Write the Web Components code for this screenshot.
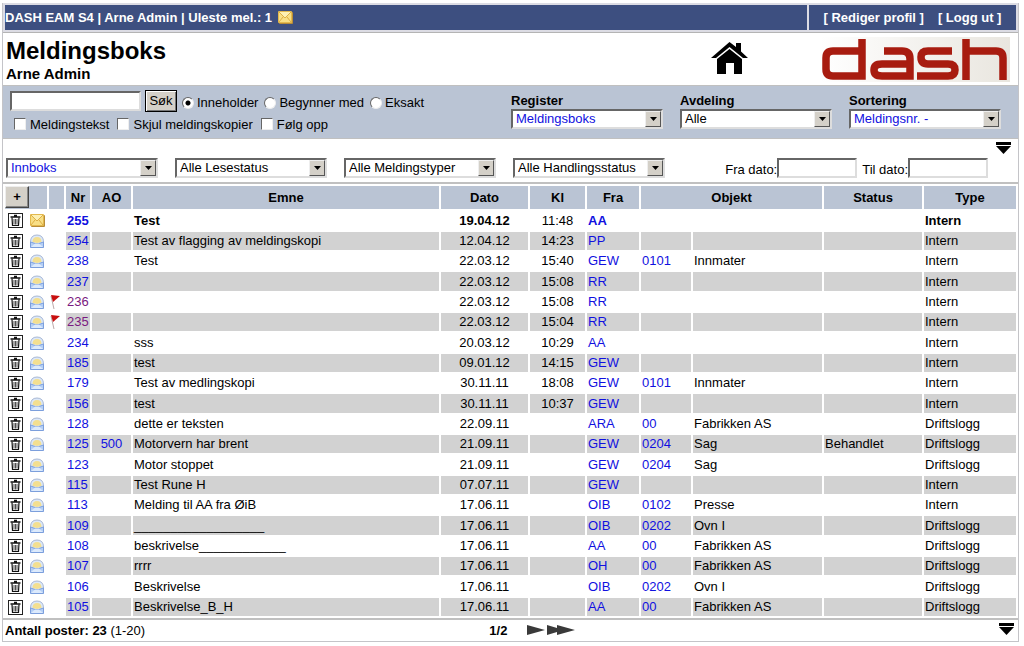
<!DOCTYPE html>
<html lang="no">
<head>
<meta charset="utf-8">
<title>Meldingsboks</title>
<style>
body{margin:3px 5px 3px 2px;background:#fff;color:#000;font:13px/16px "Liberation Sans",Arial,sans-serif}
</style>
</head>
<body>
<message-app></message-app>
<script>
const define = (name, html, setup) => {
  const template = document.createElement('template');
  template.innerHTML = html;
  customElements.define(name, class extends HTMLElement {
    connectedCallback() {
      if (this.shadowRoot) return;
      const root = this.attachShadow({mode: 'open'});
      root.append(template.content.cloneNode(true));
      if (setup) setup(root, this);
    }
  });
};

const icons = {
  mail: [15, 13, `<rect x="1" y="1" width="14" height="12" rx="1" fill="#b88c38"/><rect width="14" height="12" rx="1" fill="#e3b94e"/><rect x="1" y="1" width="12" height="10" fill="#f8df86"/><path d="M1 1H13L7 7Z" fill="#fdf0b4"/><path d="M1 1L7 7L13 1M1 11L5 6M13 11L9 6" fill="none" stroke="#d9a83c" stroke-width=".9"/>`],
  open: [14, 14, `<path d="M.5 8Q.5 1 7 1Q13.500 1 13.500 8V13H.5Z" fill="#dce8f8" stroke="#a8b8d4"/><path d="M2.500 8Q2.500 3 7 3Q11.500 3 11.500 8L7 9Z" fill="#f3df90"/><path d="M.5 8L5 9.500H9L13.500 8V13.500H.5Z" fill="#b4cff6" stroke="#7c9fdc"/><path d="M1 13L5 9.500H9L13 13Z" fill="#dceafc"/>`],
  trash: [15, 15, `<rect x=".5" y=".5" width="14" height="14" fill="#fff" stroke="#222"/><path d="M2.500 4H12.500M6 2.500H9" stroke="#111" stroke-width="1.400"/><path d="M4 4.500L4.500 12.500H10.500L11 4.500" fill="none" stroke="#111" stroke-width="1.200"/><path d="M6 6V11.500M7.500 6V11.500M9 6V11.500" stroke="#222" stroke-width=".8"/>`],
  flag: [11, 15, `<path d="M1 1L4 14" stroke="#baa" fill="none"/><path d="M1 0L10 1L3 7Z" fill="#c80f0f"/>`],
  home: [37, 32, `<path d="M0 16L18.500 0L25 5V1H30V9.500L37 16H32L18.500 5L5 16Z"/><path d="M6 17L18.500 7L31 17V32H23V21H15V32H6Z"/>`],
  down: [15, 12, `<path d="M0 0H15V3H0ZM0 4H15L7.500 12Z"/>`],
  next: [18, 10, `<path d="M0 0L18 5L0 10Z" fill="#3a3a3a"/>`],
  last: [28, 10, `<path d="M0 0L10 3V0L28 5L10 10V7L0 10Z" fill="#3a3a3a"/>`],
  logo: [190, 45, `<defs><linearGradient id="g"><stop offset="0" stop-color="#fff"/><stop offset="1" stop-color="#e9e6df"/></linearGradient></defs><rect width="190" height="45" fill="url(#g)"/><g fill="none" stroke="#a81c10" stroke-width="7.500"><path d="M42 2V39H13Q6 39 6 32V21Q6 14 13 14H42"/><path d="M64 14H82Q90 14 90 22V39H62Q54 39 54 33Q54 27 62 27H90"/><path d="M132 14H108Q101 14 101 20Q101 27 108 27H128Q135 27 135 33Q135 39 128 39H97"/><path d="M146 2V43M146 14H176Q183 14 183 21V43"/></g>`]
};
define('app-icon', `<style>:host{display:inline-block;line-height:0}svg{display:block}</style>`, (root, host) => {
  const [w, h, body] = icons[host.getAttribute('name')];
  root.innerHTML += `<svg width="${w}" height="${h}" viewBox="0 0 ${w} ${h}" aria-hidden="true">${body}</svg>`;
});

define('select-box', `<style>
:host{display:block;width:152px}
:host([active]) select{color:#1010e0}
label{display:block;font-weight:bold}
.box{display:grid;align-items:center;height:20px}
select{grid-area:1/1;appearance:none;box-sizing:border-box;width:100%;height:20px;margin:0;padding:0 20px 0 3px;border:2px solid;border-color:#666 #ddd #ddd #666;border-radius:0;background:#fff;color:#000;font:inherit}
.arrow{grid-area:1/1;justify-self:end;box-sizing:border-box;width:16px;height:16px;margin-right:2px;border:1px solid;border-color:#eee #555 #555 #eee;background:#d4d0c8;pointer-events:none;display:grid;place-items:center}
</style><label for="s"></label><div class="box"><select id="s"></select><span class="arrow"><svg width="7" height="4"><path d="M0 0H7L3.500 4Z"/></svg></span></div>`, (root, host) => {
  const label = root.querySelector('label'), select = root.querySelector('select');
  if (host.hasAttribute('label')) label.textContent = host.getAttribute('label');
  else { label.remove(); select.setAttribute('aria-label', host.getAttribute('value')); }
  select.add(new Option(host.getAttribute('value')));
});

define('top-bar', `<style>
:host{display:flex;gap:2px;padding:2px;background:#dcdce4;border-bottom:1px solid #b4b4b4;font-weight:bold;color:#fff}
div{background:#3d4f80;height:25px;display:flex;align-items:center;box-sizing:border-box}
.who{flex:1;gap:6px}.links{width:207px;justify-content:center;gap:14px}
a{color:inherit;text-decoration:none}
</style><div class="who"><span>DASH EAM S4 | Arne Admin | Uleste mel.: 1</span><app-icon name="mail"></app-icon></div>
<div class="links"><a href="#profil">[ Rediger profil ]</a><a href="#ut">[ Logg ut ]</a></div>`);

define('page-heading', `<style>
:host{display:flex;align-items:center;height:51px;padding:1px 8px 0 3px;border-bottom:1px solid #c0c0c0}
div{flex:1}h1{margin:0;font-size:24px;line-height:28px}p{margin:0;font-size:15px;line-height:18px;font-weight:bold}
a{margin-right:72px;color:#000}
</style><div><h1>Meldingsboks</h1><p>Arne Admin</p></div><a href="#hjem" aria-label="Hjem"><app-icon name="home"></app-icon></a><app-icon name="logo"></app-icon>`);

define('search-panel', `<style>
:host{display:flex;height:53px;background:#bac4d4;border-bottom:1px solid #c0c0c0;box-sizing:border-box}
form{flex:1;padding:3px 0 0 7px}
.row{display:flex;align-items:center;height:24px}
.opts{height:22px;padding-left:4px}
input[type=text]{box-sizing:border-box;width:131px;height:20px;margin:0 4px 0 0;border:2px solid;border-color:#666 #ddd #ddd #666}
button{box-sizing:border-box;width:32px;height:22px;margin-right:5px;padding:0;border:1px solid #000;box-shadow:inset 1px 1px #fff,inset -1px -1px #777;background:#d4d0c8;font:inherit}
label{display:flex;align-items:center;margin-right:6px;padding-top:4px}
.opts label{margin-right:8px;padding-top:2px}
input[type=radio],input[type=checkbox]{appearance:none;box-sizing:border-box;width:12px;height:12px;margin:0 3px 0 0;background:#fff;border:1px solid;border-color:#666 #eee #eee #666}
input[type=checkbox]{margin:0 4px 2px 0}
input[type=radio]{border-radius:50%}
input[type=radio]:checked{background:radial-gradient(circle,#000 2px,#fff 3px)}
.selects{display:flex;gap:17px;padding:7px 17px 0 0}
</style><form><div class="row"><input type="text" aria-label="Søk"><button type="button">Søk</button><label><input type="radio" name="m" checked>Inneholder</label><label><input type="radio" name="m">Begynner med</label><label><input type="radio" name="m">Eksakt</label></div>
<div class="row opts"><label><input type="checkbox">Meldingstekst</label><label><input type="checkbox">Skjul meldingskopier</label><label><input type="checkbox">Følg opp</label></div></form>
<div class="selects"><select-box label="Register" value="Meldingsboks" active></select-box><select-box label="Avdeling" value="Alle"></select-box><select-box label="Sortering" value="Meldingsnr. -" active></select-box></div>`);

define('filter-bar', `<style>
:host{display:flex;align-items:flex-end;height:45px;box-sizing:border-box;padding:0 7px 4px 3px;border-bottom:2px solid #c0c0c0}
.selects{display:flex;gap:17px;flex:1}
.dates{display:flex;gap:5px}label{display:flex;align-items:flex-end}
input{box-sizing:border-box;width:80px;height:20px;margin:0;border:2px solid;border-color:#666 #ddd #ddd #666}
a{align-self:flex-start;padding:3px 0 0 8px;color:#000}
</style><div class="selects"><select-box value="Innboks" active></select-box><select-box value="Alle Lesestatus"></select-box><select-box value="Alle Meldingstyper"></select-box><select-box value="Alle Handlingsstatus"></select-box></div>
<div class="dates"><label>Fra dato:<input type="text"></label><label>Til dato:<input type="text"></label></div><a href="#ned" aria-label="Til bunnen"><app-icon name="down"></app-icon></a>`);

const rows = [
['255','','Test','19.04.12','11:48','AA','','','','Intern'],
['254','','Test av flagging av meldingskopi','12.04.12','14:23','PP','','','','Intern'],
['238','','Test','22.03.12','15:40','GEW','0101','Innmater','','Intern'],
['237','','','22.03.12','15:08','RR','','','','Intern'],
['236','','','22.03.12','15:08','RR','','','','Intern'],
['235','','','22.03.12','15:04','RR','','','','Intern'],
['234','','sss','20.03.12','10:29','AA','','','','Intern'],
['185','','test','09.01.12','14:15','GEW','','','','Intern'],
['179','','Test av medlingskopi','30.11.11','18:08','GEW','0101','Innmater','','Intern'],
['156','','test','30.11.11','10:37','GEW','','','','Intern'],
['128','','dette er teksten','22.09.11','','ARA','00','Fabrikken AS','','Driftslogg'],
['125','500','Motorvern har brent','21.09.11','','GEW','0204','Sag','Behandlet','Driftslogg'],
['123','','Motor stoppet','21.09.11','','GEW','0204','Sag','','Driftslogg'],
['115','','Test Rune H','07.07.11','','GEW','','','','Intern'],
['113','','Melding til AA fra ØiB','17.06.11','','OIB','0102','Presse','','Intern'],
['109','','__________________','17.06.11','','OIB','0202','Ovn I','','Driftslogg'],
['108','','beskrivelse____________','17.06.11','','AA','00','Fabrikken AS','','Driftslogg'],
['107','','rrrr','17.06.11','','OH','00','Fabrikken AS','','Driftslogg'],
['106','','Beskrivelse','17.06.11','','OIB','0202','Ovn I','','Driftslogg'],
['105','','Beskrivelse_B_H','17.06.11','','AA','00','Fabrikken AS','','Driftslogg']
];
define('message-table', `<style>
:host{display:block}
table{width:100%;table-layout:fixed;border-collapse:separate;border-spacing:2px}
th{height:23px;padding:0;background:#bac4d4}
th.tools{text-align:left;vertical-align:top}
td{height:18px;padding:0 1px;line-height:18px;white-space:nowrap}
tbody tr:nth-child(3n+1) td{height:19px}
tbody tr:nth-child(even) td:nth-child(n+4){background:#d2d2d2}
tbody tr:first-child td:not(:nth-child(8)){font-weight:bold}
.c{text-align:center}
td:nth-child(-n+3){padding:0 0 0 1px}
td:nth-child(1){padding:0;text-align:center}
td app-icon{display:block}
td:nth-child(1) app-icon{width:15px;margin:0 auto 0 3px}
a{color:#1010e0;text-decoration:none}a.seen{color:#7a1a80}
button{display:block;width:24px;height:22px;padding:0;border:1px solid;border-color:#eee #444 #444 #eee;box-shadow:inset -1px -1px #888;background:#d4d0c8;font:inherit}
</style><table><colgroup><col style="width:22px"><col style="width:18px"><col style="width:15px"><col style="width:24px"><col style="width:39px"><col><col style="width:87px"><col style="width:55px"><col style="width:52px"><col style="width:50px"><col style="width:129px"><col style="width:98px"><col style="width:92px"></colgroup>
<thead><tr><th class="tools" colspan="2"><button type="button">+</button></th><th></th><th>Nr</th><th>AO</th><th>Emne</th><th>Dato</th><th>Kl</th><th>Fra</th><th colspan="2">Objekt</th><th>Status</th><th>Type</th></tr></thead><tbody></tbody></table>`, root => {
  const link = (t, cls) => t ? `<a href="#${t}"${cls ? ` class="${cls}"` : ''}>${t}</a>` : '';
  root.querySelector('tbody').innerHTML = rows.map(([nr, ao, emne, dato, kl, fra, obj, name, status, type], i) => {
    const flagged = nr === '236' || nr === '235';
    return `<tr><td><app-icon name="trash"></app-icon></td><td><app-icon name="${i ? 'open' : 'mail'}"></app-icon></td><td>${flagged ? '<app-icon name="flag"></app-icon>' : ''}</td><td>${link(nr, flagged && 'seen')}</td><td class="c">${link(ao)}</td><td>${emne}</td><td class="c">${dato}</td><td class="c">${kl}</td><td>${link(fra)}</td><td>${link(obj)}</td><td>${name}</td><td>${status}</td><td>${type}</td></tr>`;
  }).join('');
});

define('table-footer', `<style>
:host{display:grid;grid-template-columns:48% auto 1fr;align-items:center;height:21px;border-top:2px solid #c0c0c0;padding:0 4px 0 2px}
.page{display:flex;align-items:center;gap:2px}.page b{margin-right:18px}
.end{justify-self:end;color:#000}
</style><span><b>Antall poster: 23</b> (1-20)</span><span class="page"><b>1/2</b><a href="#neste" aria-label="Neste"><app-icon name="next"></app-icon></a><a href="#siste" aria-label="Siste"><app-icon name="last"></app-icon></a></span><a class="end" href="#ned" aria-label="Til bunnen"><app-icon name="down"></app-icon></a>`);

define('message-app', `<style>:host{display:block;border:1px solid #c4c4c8;border-top:0}</style>
<top-bar></top-bar><page-heading></page-heading><search-panel></search-panel><filter-bar></filter-bar><message-table></message-table><table-footer></table-footer>`);
</script>
</body>
</html>
